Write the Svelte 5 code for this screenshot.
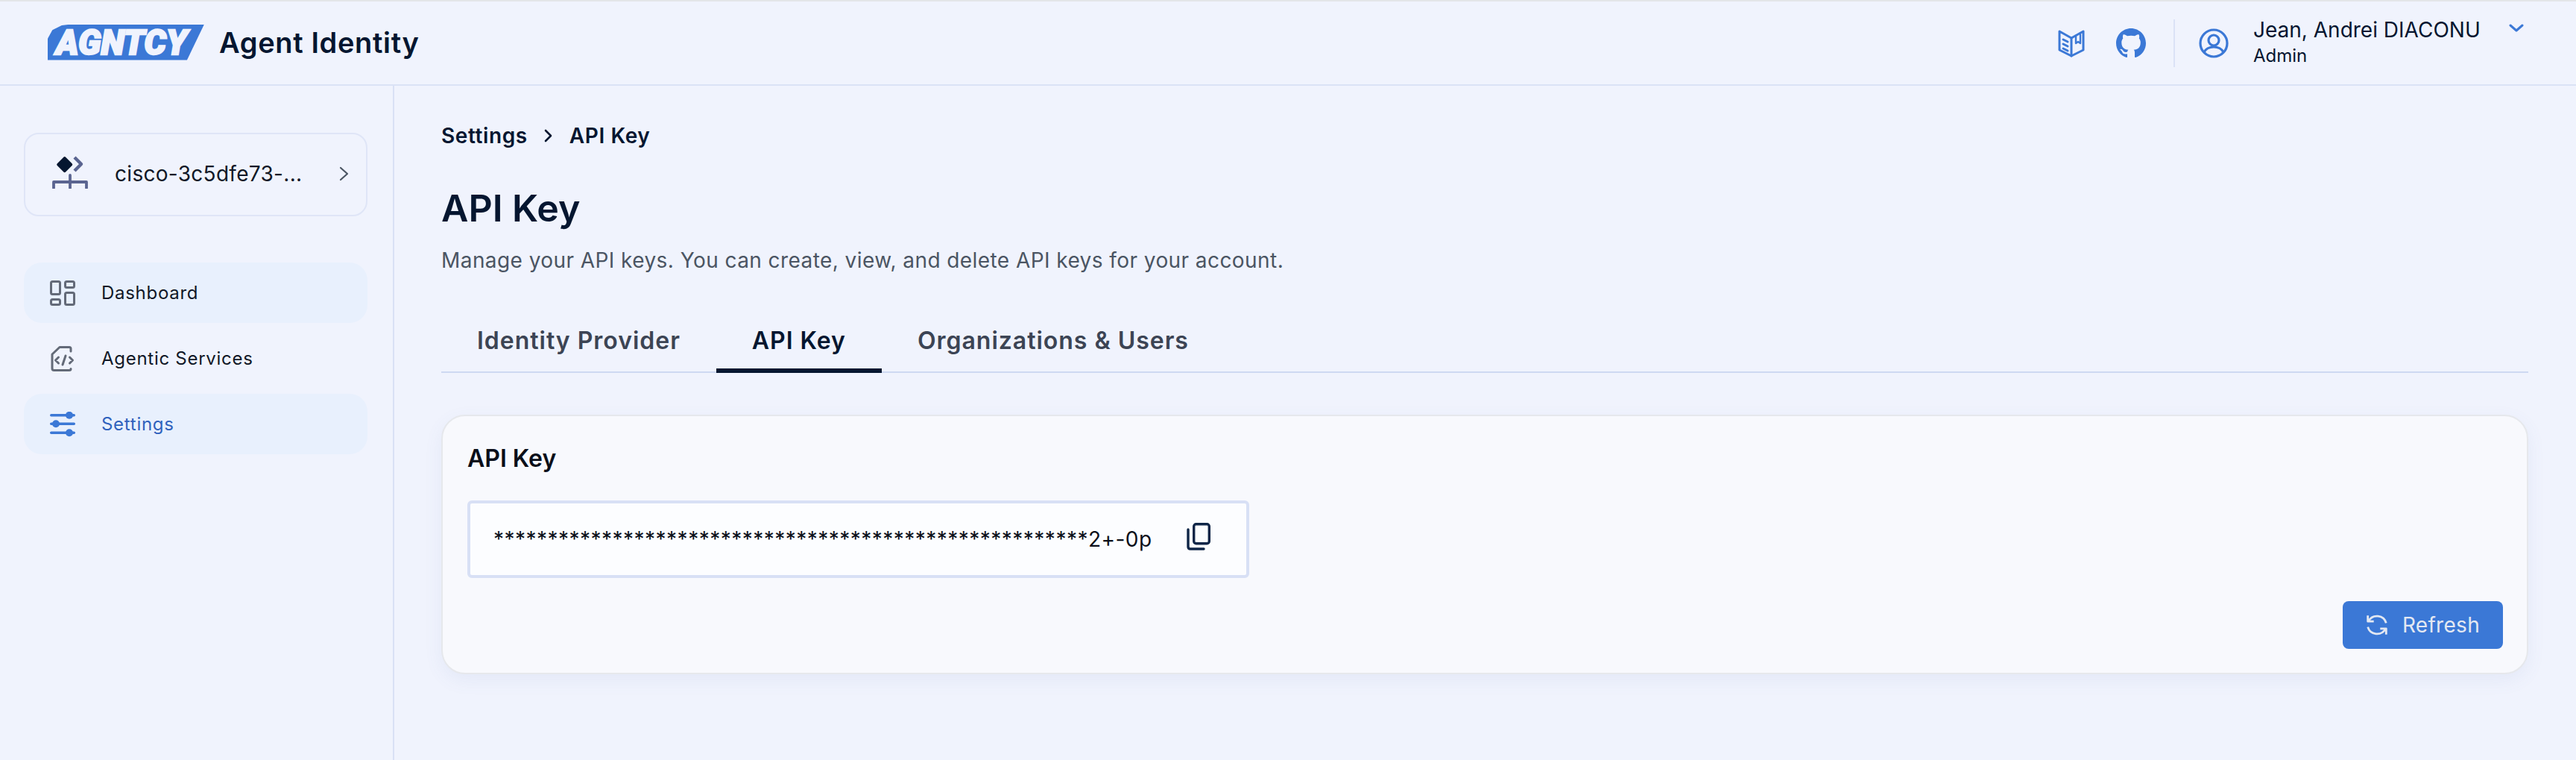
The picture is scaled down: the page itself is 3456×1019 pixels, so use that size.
<script>
  const nav = [
    { label: 'Dashboard', kind: 'dash', cls: 'tint' },
    { label: 'Agentic Services', kind: 'code', cls: '' },
    { label: 'Settings', kind: 'sliders', cls: 'tint active' }
  ];
  const tabs = ['Identity Provider', 'API Key', 'Organizations & Users'];
  const masked = '*'.repeat(55) + '2+-0p';
</script>

<div class="page">
  <header class="top">
    <div class="brand">
      <div class="logo"><span>AGNTCY</span></div>
      <div class="product">Agent Identity</div>
    </div>
    <div class="tools">
      <svg class="i-book" viewBox="0 0 36 38" fill="none" stroke="#3b78d6" stroke-width="3" stroke-linejoin="round" stroke-linecap="round">
        <path d="M2 3 L18 12 L34 3 V28 L18 36 L2 28 Z" />
        <path d="M18 12 V36" />
        <path d="M7 14 L13 17 M7 20 L13 23 M7 26 L13 29" />
        <path d="M24 9 V19 L27 17 L30 19 V7" stroke-width="2.4" />
      </svg>
      <svg class="i-gh" viewBox="0 0 16 16" fill="#3b78d6">
        <path d="M8 0C3.58 0 0 3.58 0 8c0 3.54 2.29 6.53 5.47 7.59.4.07.55-.17.55-.38 0-.19-.01-.82-.01-1.49-2.01.37-2.53-.49-2.69-.94-.09-.23-.48-.94-.82-1.13-.28-.15-.68-.52-.01-.53.63-.01 1.08.58 1.23.82.72 1.21 1.87.87 2.33.66.07-.52.28-.87.51-1.07-1.78-.2-3.64-.89-3.64-3.95 0-.87.31-1.59.82-2.15-.08-.2-.36-1.02.08-2.12 0 0 .67-.21 2.2.82.64-.18 1.32-.27 2-.27s1.36.09 2 .27c1.53-1.04 2.2-.82 2.2-.82.44 1.1.16 1.92.08 2.12.51.56.82 1.27.82 2.15 0 3.07-1.87 3.75-3.65 3.95.29.25.54.73.54 1.48 0 1.07-.01 1.93-.01 2.2 0 .21.15.46.55.38A8.01 8.01 0 0 0 16 8c0-4.42-3.58-8-8-8z" />
      </svg>
      <div class="vr"></div>
      <svg class="i-user" viewBox="0 0 40 40" fill="none" stroke="#3b78d6" stroke-width="3.2">
        <circle cx="20" cy="20" r="18" />
        <circle cx="20" cy="16" r="7" />
        <path d="M7 32 C10 26 15 25 20 25 C25 25 30 26 33 32" />
      </svg>
      <div class="who">
        <div class="name">Jean, Andrei DIACONU</div>
        <div class="role">Admin</div>
      </div>
      <svg class="i-down" viewBox="0 0 20 11" fill="none" stroke="#3b78d6" stroke-width="3" stroke-linecap="round" stroke-linejoin="round">
        <path d="M2 2 L10 9 L18 2" />
      </svg>
    </div>
  </header>

  <div class="body">
    <aside class="side">
      <button class="org">
        <svg class="i-org" viewBox="0 0 48 44" fill="none">
          <rect x="8.700" y="3.700" width="16" height="16" rx="2" transform="rotate(45 16.700 11.700)" fill="#051630" />
          <path d="M30 2 L39 11 L30 20" stroke="#5a6490" stroke-width="4.400" stroke-linejoin="round" />
          <path d="M2 43 V35 H46 V43 M24 26 V43" stroke="#5a6490" stroke-width="3.800" stroke-linecap="round" stroke-linejoin="round" />
        </svg>
        <span class="org-name">cisco-3c5dfe73-...</span>
        <svg class="i-right" viewBox="0 0 13 20" fill="none" stroke="#4b5563" stroke-width="2.200" stroke-linecap="round" stroke-linejoin="round">
          <path d="M2 2 L11 10 L2 18" />
        </svg>
      </button>

      <nav class="nav">
        {#each nav as item}
          <div class="item {item.cls}">
            {#if item.kind === 'dash'}
              <svg class="ni" viewBox="0 0 34 34" fill="none" stroke="#636a78" stroke-width="3">
                <rect x="1.500" y="1.500" width="12" height="17" rx="2" />
                <rect x="20.500" y="1.500" width="12" height="8" rx="2" />
                <rect x="1.500" y="25.500" width="12" height="7" rx="2" />
                <rect x="20.500" y="16.500" width="12" height="16" rx="2" />
              </svg>
            {:else if item.kind === 'code'}
              <svg class="ni" viewBox="0 0 34 34" fill="none" stroke="#636a78" stroke-width="3" stroke-linecap="round" stroke-linejoin="round">
                <path d="M28 7 V3.500 Q28 1.500 26 1.500 H13 L3 11 V30 Q3 32.500 5.500 32.500 H26 Q28 32.500 28 30.500" />
                <path d="M11.500 15 L7.500 19 L11.500 23 M26.500 15 L30.500 19 L26.500 23 M21 13 L17 25" />
              </svg>
            {:else}
              <svg class="ni" viewBox="0 0 34 34" fill="#3b78d6">
                <rect x="0" y="3" width="34" height="3.500" rx="1.700" />
                <rect x="0" y="14.500" width="34" height="3.500" rx="1.700" />
                <rect x="0" y="26.500" width="34" height="3.500" rx="1.700" />
                <circle cx="26" cy="4.800" r="5" />
                <circle cx="8" cy="16.200" r="5" />
                <circle cx="26" cy="28.200" r="5" />
              </svg>
            {/if}
            <span>{item.label}</span>
          </div>
        {/each}
      </nav>
    </aside>

    <main class="main">
      <div class="crumbs">
        <span>Settings</span>
        <svg class="i-crumb" viewBox="0 0 12 20" fill="none" stroke="#051630" stroke-width="2.600" stroke-linecap="round" stroke-linejoin="round">
          <path d="M2 3 L9 10 L2 17" />
        </svg>
        <span>API Key</span>
      </div>
      <h1>API Key</h1>
      <p class="desc">Manage your API keys. You can create, view, and delete API keys for your account.</p>

      <div class="tabs">
        {#each tabs as t, i}
          <div class="tab" class:on={i === 1}>{t}</div>
        {/each}
      </div>

      <section class="card">
        <h2>API Key</h2>
        <div class="field">
          <span class="key">{masked}</span>
          <svg class="i-copy" viewBox="0 0 32 37" fill="none" stroke="#0f2547" stroke-width="3.400" stroke-linecap="round" stroke-linejoin="round">
            <rect x="9.700" y="1.700" width="20.600" height="26" rx="3" />
            <path d="M2 9 V32 Q2 35 5 35 H23" />
          </svg>
        </div>
        <div class="actions">
          <button class="refresh">
            <svg class="i-ref" viewBox="0 0 28 28" fill="none" stroke="#e3e8f2" stroke-width="2.600" stroke-linejoin="round">
              <path d="M3.500 9 A12 12 0 0 1 25.500 11.500" />
              <path d="M24.500 19 A12 12 0 0 1 2.500 16.500" />
              <path d="M2.500 2 V9.500 H10" />
              <path d="M25.500 26 V18.500 H18" />
            </svg>
            <span>Refresh</span>
          </button>
        </div>
      </section>
    </main>
  </div>
</div>

<style>
  :global(body) {
    margin: 0;
    background: #f0f3fd;
  }
  .page {
    height: 1019px;
    display: flex;
    flex-direction: column;
    overflow: hidden;
    font-family: Inter, "Liberation Sans", sans-serif;
    color: #051630;
    background: #f0f3fd;
    border-top: 2px solid #e3e5e8;
    box-sizing: border-box;
  }
  .top {
    height: 113px;
    flex: none;
    box-sizing: border-box;
    border-bottom: 2px solid #dbe2f6;
    display: flex;
    align-items: center;
    justify-content: space-between;
    padding: 0 70px 0 64px;
  }
  .brand {
    display: flex;
    align-items: center;
    gap: 20px;
    margin-top: -2px;
  }
  .logo {
    width: 210px;
    height: 48px;
    background: #3b78d6;
    clip-path: polygon(0 100%, 0 40%, 3% 16%, 9% 3%, 15% 0, 100% 0, 89% 100%);
    display: flex;
    align-items: center;
    justify-content: center;
  }
  .logo span {
    font-family: Roboto, Inter, sans-serif;
    font-weight: 900;
    font-style: italic;
    font-size: 46px;
    line-height: 48px;
    color: #f0f3fd;
    letter-spacing: 0;
    margin-right: 12px;
    -webkit-text-stroke: 2.400px #f0f3fd;
  }
  .product {
    font-size: 38px;
    font-weight: 600;
    letter-spacing: 0.650px;
    line-height: 48px;
  }
  .tools {
    display: flex;
    align-items: center;
  }
  .i-book {
    width: 36px;
    height: 38px;
    margin-right: 42px;
  }
  .i-gh {
    width: 40px;
    height: 40px;
    margin-right: 37px;
  }
  .vr {
    width: 2px;
    height: 64px;
    background: #dbe2f6;
    margin-right: 32px;
  }
  .i-user {
    width: 40px;
    height: 40px;
    margin-right: 33px;
  }
  .who {
    width: 343px;
    margin-top: -4px;
  }
  .name {
    font-size: 28px;
    line-height: 38px;
  }
  .role {
    font-size: 24px;
    line-height: 32px;
  }
  .i-down {
    width: 20px;
    height: 11px;
    align-self: flex-start;
    margin-top: 7px;
  }
  .body {
    flex: 1;
    display: flex;
    min-height: 0;
  }
  .side {
    width: 529px;
    flex: none;
    box-sizing: border-box;
    border-right: 2px solid #d9e1f5;
    padding: 63px 34px 0 32px;
  }
  .org {
    width: 100%;
    height: 112px;
    box-sizing: border-box;
    display: flex;
    align-items: center;
    background: transparent;
    border: 2px solid #dfe5f7;
    border-radius: 20px;
    padding: 0 23px 2px 36px;
    font: inherit;
    color: inherit;
  }
  .i-org {
    width: 48px;
    height: 44px;
    margin-right: 36px;
    margin-top: -4px;
  }
  .org-name {
    flex: 1;
    text-align: left;
    font-size: 28px;
    letter-spacing: 0.300px;
    color: #111827;
  }
  .i-right {
    width: 13px;
    height: 20px;
  }
  .nav {
    margin-top: 62px;
    display: flex;
    flex-direction: column;
    gap: 7px;
  }
  .item {
    height: 81px;
    border-radius: 24px;
    display: flex;
    align-items: center;
    padding-left: 35px;
    gap: 35px;
    font-size: 24px;
    letter-spacing: 0.720px;
    color: #111827;
  }
  .tint {
    background: #e8f0fd;
  }
  .active {
    color: #2f62bd;
  }
  .ni {
    width: 34px;
    height: 34px;
    flex: none;
  }
  .main {
    flex: 1;
    min-width: 0;
    padding: 0 64px 0 63px;
  }
  .crumbs {
    margin-top: 49px;
    display: flex;
    align-items: center;
    gap: 22px;
    font-size: 28px;
    line-height: 36px;
    font-weight: 600;
    letter-spacing: 0.600px;
  }
  .i-crumb {
    width: 12px;
    height: 20px;
  }
  h1 {
    margin: 47px 0 0;
    font-size: 50px;
    line-height: 64px;
    font-weight: 600;
  }
  .desc {
    margin: 18px 0 0;
    font-size: 28px;
    line-height: 40px;
    color: #4b5563;
    letter-spacing: 0.430px;
  }
  .tabs {
    margin-top: 49px;
    display: flex;
    border-bottom: 2px solid #ced9f2;
  }
  .tab {
    height: 82px;
    box-sizing: border-box;
    padding: 0 48px;
    display: flex;
    align-items: center;
    font-size: 32px;
    font-weight: 600;
    letter-spacing: 0.980px;
    color: #3c4454;
    margin-bottom: -2px;
    border-bottom: 6px solid transparent;
  }
  .tab.on {
    color: #051630;
    border-bottom-color: #051630;
  }
  .card {
    margin-top: 56px;
    height: 348px;
    box-sizing: border-box;
    background: #f8f9fd;
    border: 2px solid #e6e8ec;
    border-radius: 32px;
    box-shadow: 0 8px 24px rgba(90, 110, 180, 0.08);
    padding: 37px 32px 0 33px;
    display: flex;
    flex-direction: column;
  }
  h2 {
    margin: 0;
    font-size: 32px;
    line-height: 40px;
    font-weight: 600;
    color: #0b0f19;
  }
  .field {
    margin-top: 36px;
    width: 1049px;
    height: 104px;
    box-sizing: border-box;
    background: #fcfdff;
    border: 4px solid #d8e0f5;
    border-radius: 6px;
    display: flex;
    align-items: center;
    padding: 0 48px 0 31px;
    justify-content: space-between;
  }
  .key {
    font-size: 28px;
    color: #0b0f19;
    letter-spacing: 0.480px;
  }
  .i-copy {
    width: 32px;
    height: 37px;
    margin-top: -8px;
  }
  .actions {
    margin-top: 31px;
    display: flex;
    justify-content: flex-end;
  }
  .refresh {
    width: 215px;
    height: 64px;
    border: 0;
    border-radius: 8px;
    background: #3b78d6;
    display: flex;
    align-items: center;
    justify-content: center;
    gap: 19px;
    font: inherit;
    font-size: 28px;
    color: #e3e8f2;
    letter-spacing: 0.300px;
    padding: 0;
  }
  .i-ref {
    width: 30px;
    height: 30px;
  }
</style>
